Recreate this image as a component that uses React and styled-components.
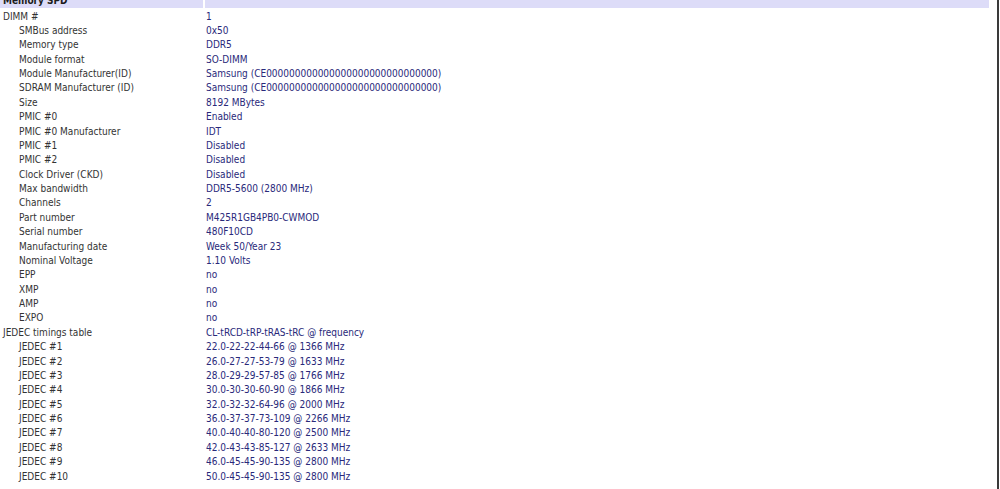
import React from "react"
import styled, { createGlobalStyle } from "styled-components"

const rowHeight = 14.375

const GlobalStyle = createGlobalStyle`
    html, body { margin: 0; padding: 0; background: #fff; }
    body { overflow: hidden; }
`

const Frame = styled.div`
    width: 999px;
    height: 489px;
    box-sizing: border-box;
    border-right: 2px solid #3a3a3a;
    overflow: hidden;
    background: #fff;
`

const Table = styled.div`
    display: grid;
    grid-template-columns: 203px 784px;
    grid-auto-rows: ${rowHeight}px;
    column-gap: 2px;
    margin-top: -6.875px;
    font-family: "DejaVu Sans Condensed", "DejaVu Sans", Verdana, sans-serif;
    font-stretch: semi-condensed;
    font-size: 10px;
`

const Cell = styled.div`
    box-sizing: border-box;
    padding-top: 3px;
    line-height: ${rowHeight - 3}px;
    white-space: nowrap;
    overflow: hidden;
`

const HeadCell = styled(Cell)`
    background: #dddcf8;
    color: #1c1c1c;
    font-weight: bold;
    padding-left: 3px;
    padding-top: 1.5px;
    line-height: ${rowHeight - 1.5}px;
`

const Label = styled(Cell)`
    color: #333;
    padding-left: ${({ $sub }) => ($sub ? 19 : 3)}px;
`

const Value = styled(Cell)`
    color: #29297a;
    padding-left: 1px;
`

const manufacturerId = "CE" + "0".repeat(30)

const rows = [
    ["DIMM #", "1", false],
    ["SMBus address", "0x50", true],
    ["Memory type", "DDR5", true],
    ["Module format", "SO-DIMM", true],
    ["Module Manufacturer(ID)", `Samsung (${manufacturerId})`, true],
    ["SDRAM Manufacturer (ID)", `Samsung (${manufacturerId})`, true],
    ["Size", "8192 MBytes", true],
    ["PMIC #0", "Enabled", true],
    ["PMIC #0 Manufacturer", "IDT", true],
    ["PMIC #1", "Disabled", true],
    ["PMIC #2", "Disabled", true],
    ["Clock Driver (CKD)", "Disabled", true],
    ["Max bandwidth", "DDR5-5600 (2800 MHz)", true],
    ["Channels", "2", true],
    ["Part number", "M425R1GB4PB0-CWMOD", true],
    ["Serial number", "480F10CD", true],
    ["Manufacturing date", "Week 50/Year 23", true],
    ["Nominal Voltage", "1.10 Volts", true],
    ["EPP", "no", true],
    ["XMP", "no", true],
    ["AMP", "no", true],
    ["EXPO", "no", true],
    ["JEDEC timings table", "CL-tRCD-tRP-tRAS-tRC @ frequency", false],
    ["JEDEC #1", "22.0-22-22-44-66 @ 1366 MHz", true],
    ["JEDEC #2", "26.0-27-27-53-79 @ 1633 MHz", true],
    ["JEDEC #3", "28.0-29-29-57-85 @ 1766 MHz", true],
    ["JEDEC #4", "30.0-30-30-60-90 @ 1866 MHz", true],
    ["JEDEC #5", "32.0-32-32-64-96 @ 2000 MHz", true],
    ["JEDEC #6", "36.0-37-37-73-109 @ 2266 MHz", true],
    ["JEDEC #7", "40.0-40-40-80-120 @ 2500 MHz", true],
    ["JEDEC #8", "42.0-43-43-85-127 @ 2633 MHz", true],
    ["JEDEC #9", "46.0-45-45-90-135 @ 2800 MHz", true],
    ["JEDEC #10", "50.0-45-45-90-135 @ 2800 MHz", true],
]

export default function App() {
    return (
        <>
            <GlobalStyle />
            <Frame>
                <Table>
                    <HeadCell>Memory SPD</HeadCell>
                    <HeadCell />
                    {rows.map(([label, value, sub]) => (
                        <React.Fragment key={label}>
                            <Label $sub={sub}>{label}</Label>
                            <Value>{value}</Value>
                        </React.Fragment>
                    ))}
                </Table>
            </Frame>
        </>
    )
}
